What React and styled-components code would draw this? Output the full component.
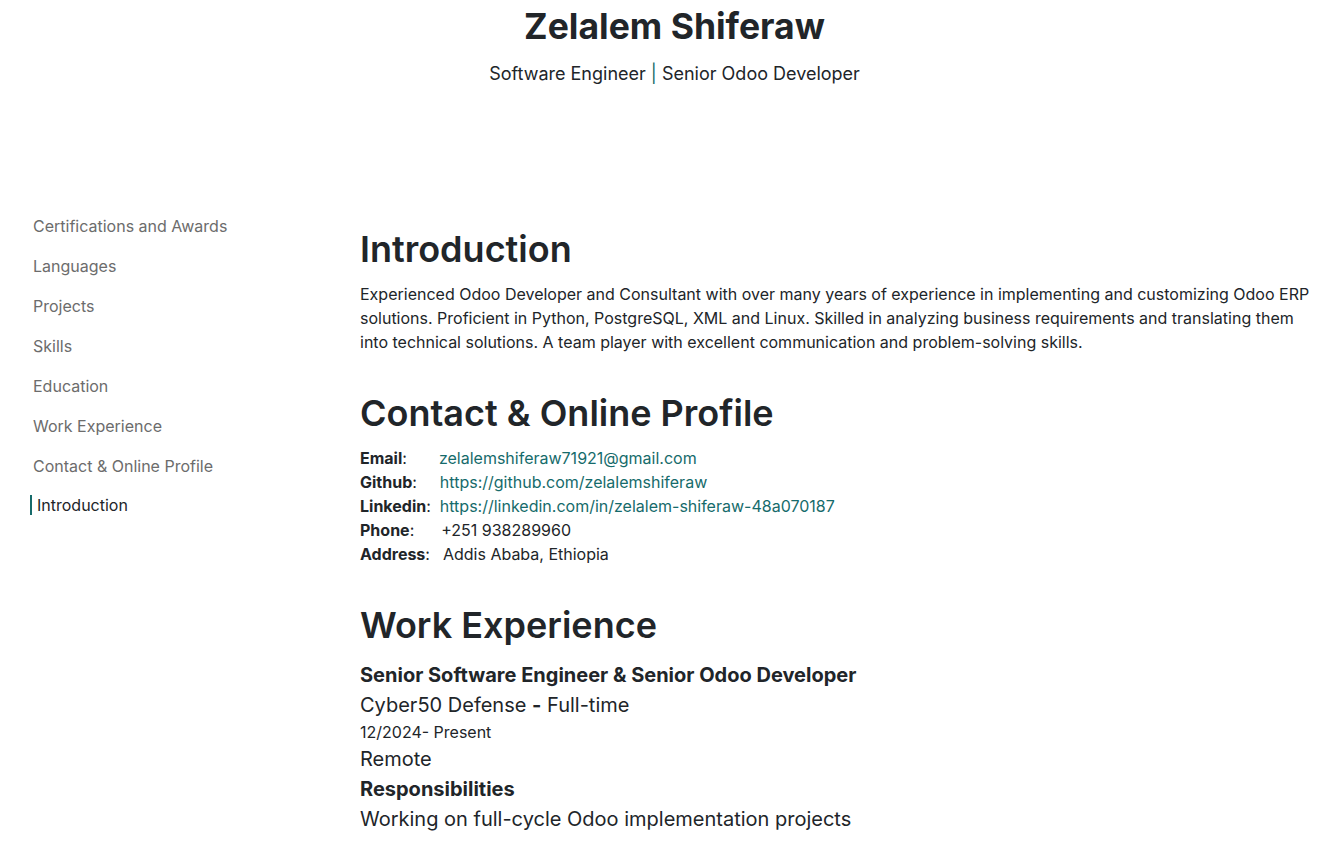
import styled, { createGlobalStyle } from "styled-components";

const GlobalStyle = createGlobalStyle`
  html, body {
    margin: 0;
    padding: 0;
    background: #fff;
  }
  body {
    font-family: Inter, "Noto Sans", sans-serif;
    color: #212529;
  }
  * { box-sizing: border-box; }
`;

const navItems = [
  "Certifications and Awards",
  "Languages",
  "Projects",
  "Skills",
  "Education",
  "Work Experience",
  "Contact & Online Profile",
  "Introduction",
];

const contacts = [
  { label: "Email", value: "zelalemshiferaw71921@gmail.com", link: true, pad: 32 },
  { label: "Github", value: "https://github.com/zelalemshiferaw", link: true, pad: 23 },
  { label: "Linkedin", value: "https://linkedin.com/in/zelalem-shiferaw-48a070187", link: true, pad: 9 },
  { label: "Phone", value: "+251 938289960", pad: 27 },
  { label: "Address", value: "Addis Ababa, Ethiopia", pad: 13 },
];

const App = () => {
  return (
    <Page>
      <GlobalStyle />
      <Header>
        <Name>Zelalem Shiferaw</Name>
        <Tagline>
          Software Engineer <Sep>|</Sep> Senior Odoo Developer
        </Tagline>
      </Header>
      <Body>
        <Sidebar>
          {navItems.map((item) => (
            <NavItem key={item} $active={item === "Introduction"}>
              {item}
            </NavItem>
          ))}
        </Sidebar>
        <Main>
          <Section>
            <SectionTitle>Introduction</SectionTitle>
            <Paragraph>
              Experienced Odoo Developer and Consultant with over many years of
              experience in implementing and customizing Odoo ERP solutions.
              Proficient in Python, PostgreSQL, XML and Linux. Skilled in
              analyzing business requirements and translating them into
              technical solutions. A team player with excellent communication
              and problem-solving skills.
            </Paragraph>
          </Section>
          <Section>
            <SectionTitle>Contact &amp; Online Profile</SectionTitle>
            <ContactList>
              {contacts.map((c) => (
                <ContactRow key={c.label}>
                  <Label>{c.label}</Label>:
                  {c.link ? (
                    <Link href="#" $pad={c.pad}>{c.value}</Link>
                  ) : (
                    <Value $pad={c.pad}>{c.value}</Value>
                  )}
                </ContactRow>
              ))}
            </ContactList>
          </Section>
          <Section>
            <SectionTitle>Work Experience</SectionTitle>
            <Job>
              <JobTitle>Senior Software Engineer &amp; Senior Odoo Developer</JobTitle>
              <JobLine>
                Cyber50 Defense <b>-</b> Full-time
              </JobLine>
              <JobDate>12/2024- Present</JobDate>
              <JobLine>Remote</JobLine>
              <JobTitle>Responsibilities</JobTitle>
              <JobLine>Working on full-cycle Odoo implementation projects</JobLine>
            </Job>
          </Section>
        </Main>
      </Body>
    </Page>
  );
};

export default App;

const Page = styled.div`
  width: 100%;
  min-height: 100vh;
`;

const Header = styled.header`
  display: flex;
  flex-direction: column;
  align-items: center;
  padding-top: 5px;
  padding-left: 17px;
  height: 186px;
`;

const Name = styled.h1`
  margin: 0;
  font-size: 35.5px;
  font-weight: 700;
  line-height: 44px;
  color: #212529;
`;

const Tagline = styled.p`
  margin: 14px 0 0;
  font-size: 18px;
  line-height: 22px;
`;

const Sep = styled.span`
  color: #166b6b;
`;

const Body = styled.div`
  display: grid;
  grid-template-columns: 360px 1fr;
  padding-right: 20px;
`;

const Sidebar = styled.nav`
  display: flex;
  flex-direction: column;
  padding-left: 30px;
  padding-top: 20px;
`;

const NavItem = styled.a`
  display: block;
  font-size: 16px;
  line-height: 24px;
  padding: 8px 0;
  color: ${(p) => (p.$active ? "#212529" : "#6c6c6c")};
  border-left: ${(p) => (p.$active ? "2px solid #166b6b" : "0")};
  padding-left: ${(p) => (p.$active ? "5px" : "3px")};
  height: 40px;
  ${(p) => p.$active && `
    line-height: 20px;
    padding-top: 0;
    padding-bottom: 0;
    height: 20px;
    margin-top: 9px;
  `}
`;

const Main = styled.main`
  display: flex;
  flex-direction: column;
  gap: 37px;
  padding-top: 41px;
`;

const Section = styled.section`
  display: flex;
  flex-direction: column;
`;

const SectionTitle = styled.h2`
  margin: 0 0 11px;
  font-size: 36px;
  font-weight: 600;
  line-height: 44px;
  color: #212529;
`;

const Paragraph = styled.p`
  margin: 0;
  font-size: 16px;
  line-height: 24px;
  max-width: 960px;
`;

const ContactList = styled.div`
  display: flex;
  flex-direction: column;
`;

const ContactRow = styled.div`
  font-size: 16px;
  line-height: 24px;
`;

const Label = styled.b`
  font-weight: 700;
`;

const Link = styled.a`
  color: #166b6b;
  text-decoration: none;
  margin-left: ${(p) => p.$pad}px;
`;

const Value = styled.span`
  margin-left: ${(p) => p.$pad}px;
`;

const Job = styled.div`
  display: flex;
  flex-direction: column;
  margin-top: 2px;
`;

const JobTitle = styled.div`
  font-size: 20px;
  font-weight: 700;
  line-height: 30px;
`;

const JobLine = styled.div`
  font-size: 20px;
  line-height: 30px;
  b { font-weight: 700; }
`;

const JobDate = styled.div`
  font-size: 16px;
  line-height: 24px;
`;
